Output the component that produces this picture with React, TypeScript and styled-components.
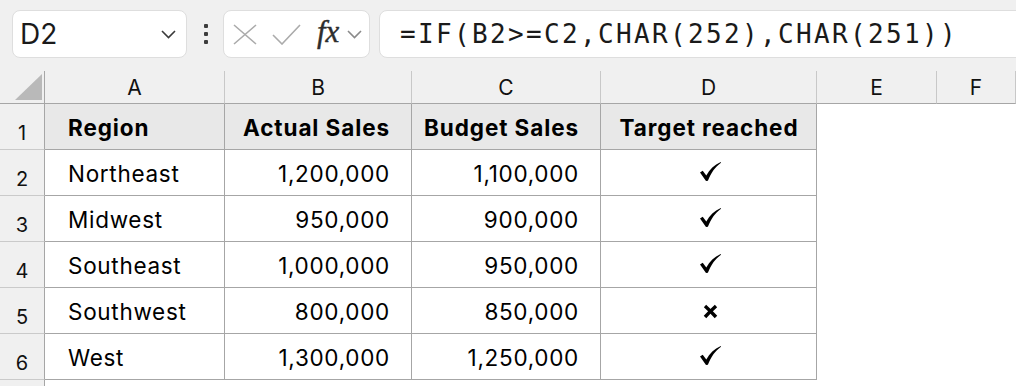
import styled, { createGlobalStyle } from "styled-components";

const GlobalStyle = createGlobalStyle`
  html, body {
    margin: 0;
    padding: 0;
    background: #ffffff;
  }
  body {
    font-family: Inter, "Noto Sans", "Liberation Sans", sans-serif;
    color: #000;
  }
`;

const Page = styled.div`
  width: 1016px;
  height: 386px;
  overflow: hidden;
  background: #ffffff;
`;

const Toolbar = styled.div`
  display: flex;
  align-items: center;
  background: #f0f0f0;
  padding: 10px 0 13px 12px;
`;

const NameBox = styled.div`
  box-sizing: border-box;
  width: 175px;
  height: 48px;
  background: #fff;
  border: 1px solid #dedede;
  border-radius: 8px;
  display: flex;
  align-items: center;
  justify-content: space-between;
  padding: 0 10px 0 7px;
  font-size: 28px;
  color: #1a1a1a;
`;

const Dots = styled.div`
  display: flex;
  flex-direction: column;
  gap: 4px;
  margin: 0 15px 0 17px;
  span {
    width: 4px;
    height: 4px;
    background: #3c3c3c;
    border-radius: 1px;
  }
`;

const FnBox = styled.div`
  box-sizing: border-box;
  width: 147px;
  height: 48px;
  background: #fff;
  border: 1px solid #dedede;
  border-radius: 8px;
  display: flex;
  align-items: center;
  padding: 0 0 0 9px;
`;

const Fx = styled.span`
  font-family: "Liberation Serif", "DejaVu Serif", serif;
  font-style: italic;
  font-size: 31px;
  color: #2d2d2d;
  margin: -4px 8px 0 16px;
  -webkit-text-stroke: 0.4px #2d2d2d;
`;

const FormulaBox = styled.div`
  box-sizing: border-box;
  flex: 1;
  height: 48px;
  margin-left: 9px;
  margin-right: -20px;
  background: #fff;
  border: 1px solid #dedede;
  border-radius: 8px;
  display: flex;
  align-items: center;
  padding-left: 20px;
  font-family: "DejaVu Sans Mono", "Liberation Mono", monospace;
  font-size: 26px;
  letter-spacing: 2.35px;
  color: #1a1a1a;
`;

const Sheet = styled.div`
  display: grid;
  grid-template-columns: 45px 180px 187px 189px 216px 120px 1fr;
  grid-template-rows: 33px repeat(7, 46px);
`;

const ColHead = styled.div`
  box-sizing: border-box;
  background: #f0f0f0;
  border-right: 1px solid #c8c8c8;
  border-bottom: 1px solid #a6a6a6;
  display: flex;
  align-items: flex-end;
  justify-content: center;
  padding-bottom: 5px;
  font-size: 21px;
  line-height: 1;
  color: #111;
`;

const Corner = styled(ColHead)`
  border-right: 1px solid #a6a6a6;
  justify-content: flex-end;
  padding: 0 2px 3px 0;
`;

const RowHead = styled.div`
  box-sizing: border-box;
  background: #f0f0f0;
  border-right: 1px solid #a6a6a6;
  border-bottom: 1px solid #cacaca;
  display: flex;
  align-items: flex-end;
  justify-content: center;
  padding-bottom: 6px;
  font-size: 20px;
  line-height: 1;
  color: #111;
`;

const Cell = styled.div<{ $align?: "left" | "right" | "center"; $head?: boolean; $plain?: boolean }>`
  box-sizing: border-box;
  background: ${(p) => (p.$head ? "#e8e8e8" : "#fff")};
  border-right: ${(p) => (p.$plain ? "none" : "1px solid #a6a6a6")};
  border-bottom: ${(p) => (p.$plain ? "none" : "1px solid #a6a6a6")};
  display: flex;
  align-items: flex-end;
  justify-content: ${(p) =>
    p.$align === "right" ? "flex-end" : p.$align === "center" ? "center" : "flex-start"};
  padding: 0 ${(p) => (p.$align === "right" ? 21 : 22)}px 10px 23px;
  font-size: 22.5px;
  font-weight: ${(p) => (p.$head ? 700 : 400)};
  letter-spacing: ${(p) => (p.$head ? 0.9 : 0.7)}px;
  line-height: 1;
  white-space: nowrap;
`;

const Mark = styled.span`
  display: flex;
  padding-bottom: 4px;
  margin-left: 2px;
`;

const Chevron = ({ w, color }: { w: number; color: string }) => (
  <svg width={w} height={w * 0.6} viewBox="0 0 15 9" fill="none">
    <polyline points="1,1 7.5,7.5 14,1" stroke={color} strokeWidth="1.6" />
  </svg>
);

const Check = () => (
  <svg width="21" height="19" viewBox="0 0 21 19">
    <path
      d="M0 10.6 L2.7 8.7 L6.3 13.4 C9.6 7.4 14.2 2.9 20.8 0 L21 0.7 C15.2 4.9 11 10.6 7.9 18.8 L6 19 Z"
      fill="#000"
    />
  </svg>
);

const Cross = () => (
  <svg width="15" height="15" viewBox="0 0 15 15">
    <path d="M2 2 Q7 6.5 13 13" stroke="#000" strokeWidth="3.4" fill="none" />
    <path d="M13 2 Q7 7.5 2 13" stroke="#000" strokeWidth="3.4" fill="none" />
  </svg>
);

const rows = [
  ["Northeast", "1,200,000", "1,100,000", true],
  ["Midwest", "950,000", "900,000", true],
  ["Southeast", "1,000,000", "950,000", true],
  ["Southwest", "800,000", "850,000", false],
  ["West", "1,300,000", "1,250,000", true],
] as const;

export default function App() {
  return (
    <Page>
      <GlobalStyle />
      <Toolbar>
        <NameBox>
          <span>D2</span>
          <Chevron w={15} color="#3a3a3a" />
        </NameBox>
        <Dots>
          <span />
          <span />
          <span />
        </Dots>
        <FnBox>
          <svg width="24" height="21" viewBox="0 0 24 21">
            <path d="M1 1 L23 20 M23 1 L1 20" stroke="#ababab" strokeWidth="1.6" />
          </svg>
          <svg width="29" height="21" viewBox="0 0 29 21" style={{ marginLeft: 15 }}>
            <polyline points="1,11 10,20 28,1" stroke="#ababab" strokeWidth="1.6" fill="none" />
          </svg>
          <Fx>fx</Fx>
          <Chevron w={15} color="#8a8a8a" />
        </FnBox>
        <FormulaBox>=IF(B2&gt;=C2,CHAR(252),CHAR(251))</FormulaBox>
      </Toolbar>
      <Sheet>
        <Corner>
          <svg width="27" height="26" viewBox="0 0 27 26">
            <polygon points="27,0 27,26 0,26" fill="#b9b9b9" />
          </svg>
        </Corner>
        {["A", "B", "C", "D", "E", "F"].map((c) => (
          <ColHead key={c}>{c}</ColHead>
        ))}

        <RowHead>1</RowHead>
        <Cell $head>Region</Cell>
        <Cell $head $align="right">Actual Sales</Cell>
        <Cell $head $align="right">Budget Sales</Cell>
        <Cell $head $align="center">Target reached</Cell>
        <Cell $plain />
        <Cell $plain />

        {rows.map(([region, actual, budget, ok], i) => (
          <>
            <RowHead key={`h${i}`}>{i + 2}</RowHead>
            <Cell key={`a${i}`}>{region}</Cell>
            <Cell key={`b${i}`} $align="right">{actual}</Cell>
            <Cell key={`c${i}`} $align="right">{budget}</Cell>
            <Cell key={`d${i}`} $align="center">
              <Mark>{ok ? <Check /> : <Cross />}</Mark>
            </Cell>
            <Cell key={`e${i}`} $plain />
            <Cell key={`f${i}`} $plain />
          </>
        ))}

        {/* row 7 is only a sliver at the bottom edge */}
        <RowHead />
      </Sheet>
    </Page>
  );
}
